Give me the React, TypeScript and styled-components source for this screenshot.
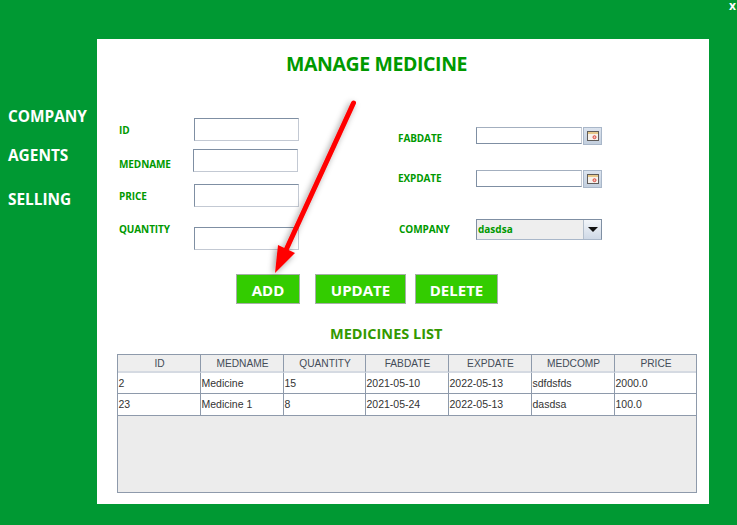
import React from 'react';
import styled, { createGlobalStyle } from 'styled-components';

const GlobalStyle = createGlobalStyle`
  html, body {
    margin: 0;
    padding: 0;
    background: #009933;
  }
  #root {
    height: 525px;
  }
`;

const Page = styled.div`
  position: relative;
  display: flex;
  width: 737px;
  height: 525px;
  overflow: hidden;
  background: #009933;
  font-family: "Open Sans", "Noto Sans", sans-serif;
`;

const Sidebar = styled.nav`
  display: flex;
  flex-direction: column;
  width: 97px;
  padding: 106px 0 0 8px;
  box-sizing: border-box;
`;

const NavItem = styled.div<{ $gap: number }>`
  margin-bottom: ${({ $gap }) => $gap}px;
  height: 22px;
  line-height: 22px;
  font-size: 15.4px;
  font-weight: 700;
  color: #fff;
`;

const Panel = styled.main`
  width: 612px;
  height: 465px;
  margin-top: 39px;
  background: #fff;
  box-sizing: border-box;
  padding: 10px 12px 0 20px;
`;

const Title = styled.h1`
  margin: 0 0 39px 169px;
  height: 30px;
  line-height: 30px;
  font-size: 19.5px;
  font-weight: 700;
  letter-spacing: -0.4px;
  color: #009900;
`;

const Form = styled.div`
  display: flex;
  height: 156px;
`;

const LeftColumn = styled.div`
  display: flex;
  flex-direction: column;
  width: 281px;
  padding-left: 2px;
  box-sizing: border-box;
`;

const RightColumn = styled.div`
  display: flex;
  flex-direction: column;
  padding-top: 9px;
`;

const Row = styled.div<{ $top?: number }>`
  display: flex;
  align-items: center;
  margin-top: ${({ $top }) => $top ?? 0}px;
`;

const FieldLabel = styled.label<{ $width: number; $dy?: number; $dx?: number }>`
  width: ${({ $width }) => $width}px;
  flex: none;
  box-sizing: border-box;
  padding-left: ${({ $dx }) => $dx ?? 0}px;
  margin-top: ${({ $dy }) => $dy ?? 0}px;
  font-size: 10px;
  font-weight: 700;
  line-height: 14px;
  letter-spacing: -0.1px;
  color: #009900;
`;

const TextField = styled.div<{ $dx?: number }>`
  width: 105px;
  height: 23px;
  margin-left: ${({ $dx }) => $dx ?? 0}px;
  box-sizing: border-box;
  background: #fff;
  border: 1px solid #7f8fa3;
  border-right-color: #c3c9d3;
  border-bottom-color: #c3c9d3;
`;

const DateField = styled.div`
  display: flex;
  gap: 1px;
`;

const DateInput = styled.div`
  width: 106px;
  height: 17px;
  box-sizing: border-box;
  background: #fff;
  border: 1px solid #7f8fa3;
  border-right-color: #c3c9d3;
  border-bottom-color: #7f8fa3;
  border-top-color: #a3afbf;
`;

const CalendarButton = styled.div`
  display: flex;
  align-items: center;
  justify-content: center;
  width: 19px;
  height: 18px;
  box-sizing: border-box;
  background: linear-gradient(#dbe3ee, #c3cfde);
  border: 1px solid #a9b7c9;
`;

const Combo = styled.div`
  display: flex;
  width: 126px;
  height: 21px;
  box-sizing: border-box;
  background: #eeeeee;
  border: 1px solid #7f8fa3;
  border-bottom-color: #a9b7c9;
`;

const ComboValue = styled.div`
  flex: 1;
  padding-left: 1px;
  font-size: 10px;
  font-weight: 700;
  line-height: 19px;
  color: #009900;
  border-right: 1px solid #b4bfcc;
`;

const ComboArrow = styled.div`
  display: flex;
  align-items: center;
  justify-content: center;
  width: 17px;
  background: linear-gradient(#f2f5f9, #cfd9e6);
`;

const Triangle = styled.div`
  width: 0;
  height: 0;
  border-left: 5px solid transparent;
  border-right: 5px solid transparent;
  border-top: 5px solid #111;
`;

const Buttons = styled.div`
  display: flex;
  margin: 0 0 0 119px;
`;

const ActionButton = styled.button<{ $width: number; $gap: number }>`
  width: ${({ $width }) => $width}px;
  height: 30px;
  margin-right: ${({ $gap }) => $gap}px;
  padding: 2px 0 0;
  box-sizing: border-box;
  background: #33cc00;
  border: 1px solid #a5b0a8;
  color: #fff;
  font-family: inherit;
  font-size: 15px;
  font-weight: 700;
`;

const ListTitle = styled.h2`
  margin: 19px 0 9px 213px;
  height: 22px;
  line-height: 22px;
  font-size: 14.5px;
  font-weight: 700;
  color: #339900;
`;

const TableBox = styled.div`
  width: 580px;
  height: 139px;
  box-sizing: border-box;
  background: #ececec;
  border: 1px solid #8e9aab;
  font-family: "Liberation Sans", Arial, sans-serif;
  font-size: 10.5px;
  color: #333;
`;

const Grid = styled.div`
  display: grid;
  grid-template-columns: 83px 83px 82px 83px 83px 83px 81px;
  background: #fff;
`;

const HeaderCell = styled.div<{ $last?: boolean }>`
  height: 18px;
  line-height: 17px;
  box-sizing: border-box;
  padding-left: 1px;
  text-align: center;
  font-size: 10.2px;
  background: #eeeeee;
  color: #444c58;
  border-right: ${({ $last }) => ($last ? 'none' : '1px solid #8e9aab')};
  border-bottom: 2px solid #d5dae2;
`;

const Cell = styled.div<{ $last?: boolean; $height: number }>`
  height: ${({ $height }) => $height}px;
  line-height: 20px;
  box-sizing: border-box;
  padding-left: 0.5px;
  white-space: nowrap;
  overflow: hidden;
  border-right: ${({ $last }) => ($last ? 'none' : '1px solid #8e9aab')};
  border-bottom: 1px solid #8e9aab;
`;

const Arrow = styled.svg`
  position: absolute;
  left: 260px;
  top: 90px;
  overflow: visible;
  pointer-events: none;
`;

const CloseMark = styled.div`
  position: absolute;
  right: 1px;
  top: 0;
  font-size: 12px;
  font-weight: 700;
  line-height: 11px;
  color: #fff;
`;

const columns = ['ID', 'MEDNAME', 'QUANTITY', 'FABDATE', 'EXPDATE', 'MEDCOMP', 'PRICE'];

const medicines = [
  ['2', 'Medicine', '15', '2021-05-10', '2022-05-13', 'sdfdsfds', '2000.0'],
  ['23', 'Medicine 1', '8', '2021-05-24', '2022-05-13', 'dasdsa', '100.0'],
];

const CalendarIcon = () => (
  <svg width="12" height="10" viewBox="0 0 12 10">
    <rect x="0.5" y="0.5" width="11" height="9" fill="#f7f2ec" stroke="#5f5c5a" />
    <rect x="1" y="1" width="10" height="2" fill="#e6c88a" />
    <circle cx="7.5" cy="6.2" r="1.5" fill="#f5c0b8" stroke="#d9483f" />
  </svg>
);

const App: React.FC = () => {
  return (
    <Page>
      <GlobalStyle />
      <Sidebar>
        <NavItem $gap={17}>COMPANY</NavItem>
        <NavItem $gap={22}>AGENTS</NavItem>
        <NavItem $gap={0}>SELLING</NavItem>
      </Sidebar>
      <Panel>
        <Title>MANAGE MEDICINE</Title>
        <Form>
          <LeftColumn>
            <Row $top={0}>
              <FieldLabel $width={75} $dy={1}>ID</FieldLabel>
              <TextField />
            </Row>
            <Row $top={8}>
              <FieldLabel $width={75} $dy={7}>MEDNAME</FieldLabel>
              <TextField $dx={-1} />
            </Row>
            <Row $top={12}>
              <FieldLabel $width={75} $dy={1}>PRICE</FieldLabel>
              <TextField />
            </Row>
            <Row $top={20}>
              <FieldLabel $width={75} $dy={-19}>QUANTITY</FieldLabel>
              <TextField />
            </Row>
          </LeftColumn>
          <RightColumn>
            <Row>
              <FieldLabel $width={78} $dy={4}>FABDATE</FieldLabel>
              <DateField>
                <DateInput />
                <CalendarButton><CalendarIcon /></CalendarButton>
              </DateField>
            </Row>
            <Row $top={25}>
              <FieldLabel $width={78} $dy={-2}>EXPDATE</FieldLabel>
              <DateField>
                <DateInput />
                <CalendarButton><CalendarIcon /></CalendarButton>
              </DateField>
            </Row>
            <Row $top={31}>
              <FieldLabel $width={78} $dy={-2} $dx={1}>COMPANY</FieldLabel>
              <Combo>
                <ComboValue>dasdsa</ComboValue>
                <ComboArrow><Triangle /></ComboArrow>
              </Combo>
            </Row>
          </RightColumn>
        </Form>
        <Buttons>
          <ActionButton $width={64} $gap={15}>ADD</ActionButton>
          <ActionButton $width={91} $gap={9}>UPDATE</ActionButton>
          <ActionButton $width={83} $gap={0}>DELETE</ActionButton>
        </Buttons>
        <ListTitle>MEDICINES LIST</ListTitle>
        <TableBox>
          <Grid>
            {columns.map((name, i) => (
              <HeaderCell key={name} $last={i === columns.length - 1}>{name}</HeaderCell>
            ))}
            {medicines.map((row, r) =>
              row.map((value, i) => (
                <Cell key={`${r}-${i}`} $height={r === 0 ? 21 : 22} $last={i === row.length - 1}>{value}</Cell>
              ))
            )}
          </Grid>
        </TableBox>
      </Panel>
      <Arrow width="100" height="190" viewBox="0 0 100 190">
        <defs>
          <filter id="arrowShadow" x="-40%" y="-20%" width="180%" height="140%">
            <feDropShadow dx="-2" dy="2" stdDeviation="3" floodColor="#000" floodOpacity="0.4" />
          </filter>
        </defs>
        <g filter="url(#arrowShadow)">
          <line x1="93.5" y1="13" x2="26" y2="160" stroke="#ff0000" strokeWidth="5" strokeLinecap="round" />
          <polygon points="15,183 18,155 35,163" fill="#ff0000" />
        </g>
      </Arrow>
      <CloseMark>x</CloseMark>
    </Page>
  );
};

export default App;
